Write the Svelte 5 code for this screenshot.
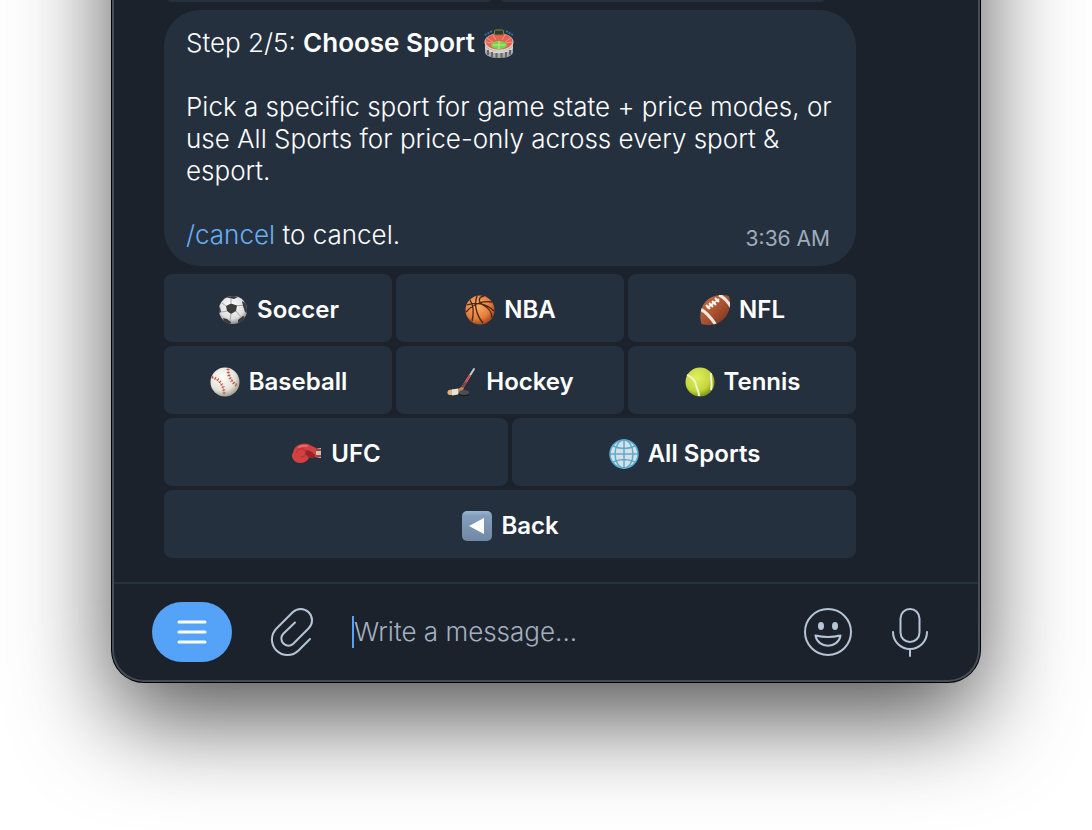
<script lang="ts">
  type Choice = { icon: string; label: string };

  const rows: Choice[][] = [
    [
      { icon: "soccer", label: "Soccer" },
      { icon: "nba", label: "NBA" },
      { icon: "nfl", label: "NFL" },
    ],
    [
      { icon: "baseball", label: "Baseball" },
      { icon: "hockey", label: "Hockey" },
      { icon: "tennis", label: "Tennis" },
    ],
    [
      { icon: "ufc", label: "UFC" },
      { icon: "globe", label: "All Sports" },
    ],
    [{ icon: "back", label: "Back" }],
  ];

  let message = $state("");
</script>

{#snippet emoji(name: string)}
  <svg class="emoji" viewBox="0 0 30 30" aria-hidden="true">
    {#if name === "stadium"}
      <path d="M1 11v12c0 8 28 8 28 0V11z" fill="#a9a9a9" />
      <path d="M1 16c2 8 26 8 28 0v3c-2 7-26 7-28 0z" fill="#d4d4d2" />
      <path d="M4 21v5M8 23v5M12.500 24v5M17.500 24v5M22 23v5M26 21v5" stroke="#66676b" stroke-width="2" />
      <ellipse cx="15" cy="13" rx="14.500" ry="9" fill="#d8d3ce" />
      <ellipse cx="15" cy="12.500" rx="13.500" ry="8" fill="#e8604f" />
      <path d="M3 9l6 4M1.500 13l7 1M27 9l-6 4M28.500 13l-7 1M9 6l3 5M21 6l-3 5" stroke="#f3978a" />
      <ellipse cx="15" cy="16" rx="8" ry="4" fill="#79d34f" />
      <path d="M15 12v8M9 16h12" stroke="#b9ef92" />
      <path d="M1 6l7-4M29 6l-7-4" stroke="#2c75a5" stroke-width="2" stroke-dasharray="2 1" />
      <rect x="10.500" y="1" width="9" height="5" rx="1" fill="#34372c" stroke="#81803e" />
    {:else if name === "soccer"}
      <defs>
        <radialGradient id="white-ball" cx="45%" cy="35%" r="65%">
          <stop offset="0" stop-color="#ffffff" />
          <stop offset="0.7" stop-color="#dedede" />
          <stop offset="1" stop-color="#8d8d8d" />
        </radialGradient>
        <clipPath id="ball-clip"><circle cx="15" cy="15" r="14" /></clipPath>
      </defs>
      <circle cx="15" cy="15" r="14" fill="url(#white-ball)" />
      <g clip-path="url(#ball-clip)">
        <path d="M8 11l5-2.500 6 2 -1 5.500-5 3-4-3z" fill="#3c3c3e" />
        <path d="M7 2l8-2 5 2-4 2-5-1zM24 6l6 3v10l-3-2-2-6zM0 11l2 1 1 5-3 2zM5 23l4 1 4 3-1 3H7zM20 25l5-4 2 1-3 5-4 2z" fill="#3a3a3c" />
        <path d="M13 8.500l0-5M19 10.500l6 0M18 16l5 6M13 19l-1 7M9 16l-6 1M8 11L4 8" stroke="#a5a5a5" fill="none" />
      </g>
    {:else if name === "nba"}
      <defs>
        <radialGradient id="orange-ball" cx="40%" cy="35%" r="65%">
          <stop offset="0" stop-color="#ffaf68" />
          <stop offset="0.7" stop-color="#e37d3a" />
          <stop offset="1" stop-color="#a94e20" />
        </radialGradient>
      </defs>
      <circle cx="15" cy="15" r="14.500" fill="url(#orange-ball)" />
      <g fill="none" stroke="#4a2416" stroke-width="1.300">
        <path d="M2 10c8-3 19-2 27 6M12 1c-3 8-1 19 6 27M19 1c-6 1-6 6-1 9 6 3 9 7 9 13M5 5c4 6 4 13 2 21M1 17c5-6 15-12 26-10" />
      </g>
    {:else if name === "nfl"}
      <defs>
        <linearGradient id="leather" x1="0" y1="0" x2="1" y2="1">
          <stop offset="0" stop-color="#c2704a" />
          <stop offset="0.5" stop-color="#ac5431" />
          <stop offset="1" stop-color="#6f2e1a" />
        </linearGradient>
        <clipPath id="football-clip"><path d="M1 27C-3 10 10-3 27 .5c2 0 2.500 1 2.500 3C33 20 19 33 4 29.500c-2 0-3-.5-3-2.500z" /></clipPath>
      </defs>
      <g clip-path="url(#football-clip)">
        <path d="M0 0h30v30H0z" fill="url(#leather)" />
        <path d="M0 14q7 3 16 16M19 0q7 3 12 12" fill="none" stroke="#eeeae3" stroke-width="3" />
        <path d="M7 13L19 4" stroke="#eee8df" stroke-width="2" />
        <path d="M6 10l4 4M9 8l4 4M12 6l4 4M15 3l4 4" stroke="#fffaf2" stroke-width="2" />
      </g>
    {:else if name === "baseball"}
      <defs>
        <radialGradient id="baseball-fill" cx="40%" cy="35%" r="65%">
          <stop offset="0" stop-color="#fffff9" />
          <stop offset="0.7" stop-color="#e5e2d9" />
          <stop offset="1" stop-color="#a7a397" />
        </radialGradient>
      </defs>
      <circle cx="15" cy="15" r="14.500" fill="url(#baseball-fill)" />
      <path d="M1 10c8 2 14 10 13 19M18 1c0 8 4 15 11 18" fill="none" stroke="#c89888" />
      <path d="M2 10c8 2 13 10 12 18M18 2c0 8 4 14 10 17" fill="none" stroke="#c34942" stroke-width="3" stroke-dasharray="1 2" />
    {:else if name === "hockey"}
      <path d="M27 2L15 21" stroke="#c5cace" stroke-width="2" stroke-linecap="round" />
      <path d="M23 8l-7 12" stroke="#dc4b49" stroke-width="2" />
      <path d="M19 15l-5 7" stroke="#833f42" stroke-width="2" />
      <path d="M14 20l3 1c-2 5-6 7-14 7-3 0-3-4-1-5 6-1 9 0 12-3z" fill="#bd8a55" />
      <path d="M2 23l5-.5v5.500H3c-3 0-3-4-1-5z" fill="#e4b477" />
      <path d="M5 22.500l6-1v6l-6 1z" fill="#e5e2dc" />
      <path d="M12 26v1c0 3 10 3 10 0v-1z" fill="#16191d" />
      <ellipse cx="17" cy="25.500" rx="5" ry="2.500" fill="#4a4f53" />
    {:else if name === "tennis"}
      <defs>
        <radialGradient id="tennis-fill" cx="40%" cy="35%" r="65%">
          <stop offset="0" stop-color="#e0f05e" />
          <stop offset="0.7" stop-color="#c3d63c" />
          <stop offset="1" stop-color="#87981d" />
        </radialGradient>
      </defs>
      <circle cx="15" cy="15" r="14.500" fill="url(#tennis-fill)" />
      <path d="M2 8c6 2 8 5 9 10 1 4 3 6 3 11M26 6c-1 5 2 10 0 17" fill="none" stroke="#f0f5ca" stroke-width="2" />
    {:else if name === "ufc"}
      <path d="M23 10l6-1v10l-6-1z" fill="#c8c2bf" />
      <path d="M24 11h5M24 17h5" stroke="#b83a3a" stroke-width="2" />
      <path d="M1 14C2 6 9 4 16 5l6 3 2 1v9l-7 1c-3 6-13 7-16 1-1-2-2-4 0-6z" fill="#d24040" />
      <path d="M13 12c4-2 7 1 10 4v2l-6 1c-2-1-1-3-4-3z" fill="#942529" />
      <path d="M4 14c1-5 10-6 10 0 0 3-3 4-5 4" fill="none" stroke="#b02e32" stroke-width="1" />
      <path d="M7 8q4-2 8-1" fill="none" stroke="#e96a65" stroke-width="2" stroke-linecap="round" />
    {:else if name === "globe"}
      <circle cx="15" cy="15" r="14" fill="#d9dfe2" />
      <g fill="none" stroke="#59add0" stroke-width="1.500">
        <circle cx="15" cy="15" r="14" />
        <ellipse cx="15" cy="15" rx="9" ry="14" />
        <path d="M15 1v28M1 15h28M4 7q11 5 22 0M4 23q11-5 22 0" />
      </g>
    {:else if name === "back"}
      <defs>
        <linearGradient id="key-fill" x1="0" y1="0" x2="0" y2="1">
          <stop offset="0" stop-color="#9bb6d3" />
          <stop offset="0.15" stop-color="#849fbe" />
          <stop offset="1" stop-color="#6f88a5" />
        </linearGradient>
      </defs>
      <rect width="30" height="30" rx="5" fill="url(#key-fill)" />
      <path d="M7 15L22 7v16z" fill="#ffffff" />
    {/if}
  </svg>
{/snippet}

<main class="page">
  <div class="window">
    <section class="chat">
      <div class="previous-keys">
        <span></span>
        <span></span>
      </div>

      <article class="bubble">
        <p>Step 2/5: <strong>Choose Sport</strong> {@render emoji("stadium")}</p>
        <p>
          Pick a specific sport for game state + price modes, or use All Sports for price-only
          across every sport &amp; esport.
        </p>
        <div class="last-line">
          <p><a href="#cancel">/cancel</a> to cancel.</p>
          <time datetime="03:36">3:36 AM</time>
        </div>
      </article>

      <div class="keyboard">
        {#each rows as row}
          <div class="row">
            {#each row as choice}
              <button class="key" type="button">
                {@render emoji(choice.icon)}
                <span>{choice.label}</span>
              </button>
            {/each}
          </div>
        {/each}
      </div>
    </section>

    <form class="composer" onsubmit={(e) => e.preventDefault()}>
      <button class="menu" type="button" aria-label="Menu">
        <svg viewBox="0 0 30 26" width="30" height="26">
          <path d="M2 3h26M2 13h26M2 23h26" stroke="#ffffff" stroke-width="3" stroke-linecap="round" />
        </svg>
      </button>
      <button class="tool attach" type="button" aria-label="Attach a file">
        <svg viewBox="0 0 44 50" width="44" height="50">
          <path d="M40 32L28.500 43.500A15.500 15.500 0 0 1 6.500 21.500L22.700 5.300A11.300 11.300 0 0 1 38.700 21.300L23 37A7.100 7.100 0 0 1 13 27L25 15.500" />
        </svg>
      </button>
      <input
        class="message"
        type="text"
        placeholder="Write a message..."
        aria-label="Message"
        bind:value={message}
      />
      <button class="tool" type="button" aria-label="Emoji">
        <svg viewBox="0 0 50 50" width="50" height="50">
          <circle cx="25" cy="25" r="23" />
          <ellipse class="eye" cx="18" cy="19" rx="3" ry="4" />
          <ellipse class="eye" cx="32" cy="19" rx="3" ry="4" />
          <path d="M12.500 28.500q12.500 3 25 0c-2 13.500-23 13.500-25 0z" />
        </svg>
      </button>
      <button class="tool mic" type="button" aria-label="Record a voice message">
        <svg viewBox="0 0 38 50" width="38" height="50">
          <rect x="9.500" y="2" width="19" height="33" rx="9.500" />
          <path d="M2 25a17 17 0 0 0 34 0M19 42v7" />
        </svg>
      </button>
    </form>
  </div>
</main>

<style>
  :global(body) {
    margin: 0;
    background: #ffffff;
  }

  .page {
    min-height: 100vh;
    padding: 0 112px;
    box-sizing: border-box;
    overflow: hidden;
    font-family: Inter, "Liberation Sans", sans-serif;
    font-size: 26px;
    font-weight: 340;
    line-height: 32px;
    color: #ffffff;
  }

  /* the top of the window is scrolled out of view */
  .window {
    margin-top: -240px;
    padding-top: 200px;
    border: 2px solid #454d56;
    border-top: 0;
    border-radius: 0 0 32px 32px;
    background: #1b222c;
    box-shadow:
      0 0 0 1px #000000,
      0 36px 96px rgba(0, 0, 0, 0.68);
  }

  .chat {
    max-width: 692px;
    padding: 0 50px 24px;
  }

  .previous-keys {
    display: grid;
    grid-template-columns: 1fr 1fr;
    gap: 4px;
    margin: 0 28px 8px 0;
  }

  .previous-keys span {
    height: 42px;
    border-radius: 8px;
    background: #25303e;
  }

  .bubble {
    display: flex;
    flex-direction: column;
    gap: 32px;
    padding: 17px 16px 15px 22px;
    border-radius: 36px;
    background: #25303e;
  }

  p {
    margin: 0;
  }

  strong {
    font-weight: 600;
  }

  .bubble a {
    color: #68aef5;
    text-decoration: none;
  }

  .bubble .emoji {
    margin-left: 2px;
    vertical-align: -7px;
  }

  .last-line {
    display: flex;
    align-items: flex-end;
    justify-content: space-between;
    height: 32px;
  }

  time {
    padding-right: 10px;
    font-size: 21px;
    font-weight: 400;
    line-height: 24px;
    color: #9eacbc;
  }

  .emoji {
    flex: none;
    width: 30px;
    height: 30px;
  }

  .keyboard {
    display: flex;
    flex-direction: column;
    gap: 4px;
    margin-top: 8px;
  }

  .row {
    display: flex;
    gap: 4px;
  }

  button {
    padding: 0;
    border: 0;
    font: inherit;
    color: inherit;
    cursor: pointer;
  }

  .key {
    display: flex;
    flex: 1;
    align-items: center;
    justify-content: center;
    gap: 9px;
    height: 68px;
    padding: 3px 0 0 1px;
    border-radius: 8px;
    background: #25303e;
    font-size: 24px;
    font-weight: 600;
  }

  .composer {
    display: flex;
    align-items: center;
    height: 96px;
    padding: 0 49px 0 38px;
    border-top: 2px solid #25323f;
  }

  .menu {
    display: flex;
    align-items: center;
    justify-content: center;
    width: 80px;
    height: 60px;
    border-radius: 30px;
    background: #54a3f9;
  }

  .tool {
    display: flex;
    background: none;
  }

  .tool svg {
    fill: none;
    stroke: #b5c5d7;
    stroke-width: 2;
    stroke-linecap: round;
    stroke-linejoin: round;
  }

  .tool .eye {
    fill: #b5c5d7;
    stroke: none;
  }

  .attach {
    margin: 0 38px;
  }

  .message {
    flex: 1;
    min-width: 0;
    height: 32px;
    padding: 0;
    border: 0;
    border-left: 2px solid #54a3f9;
    outline: 0;
    background: none;
    font: inherit;
    color: #ffffff;
  }

  .message::placeholder {
    color: #a3b0c0;
    opacity: 1;
  }

  .mic {
    margin-left: 38px;
  }
</style>
